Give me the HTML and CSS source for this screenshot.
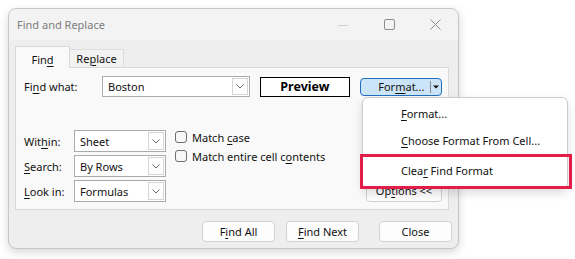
FILE: index.html
```html
<!DOCTYPE html>
<html>
<head>
<meta charset="utf-8">
<link rel="stylesheet" href="styles.css">
</head>
<body>
<div class="dialog">
  <div class="titlebar">
    <span class="title">Find and Replace</span>
    <div class="controls">
      <div class="ctl"><svg width="10" height="10" viewBox="0 0 10 10"><line x1="0" y1="5.5" x2="10" y2="5.5" stroke="#d0d0d0" stroke-width="1"/></svg></div>
      <div class="ctl"><svg width="11" height="11" viewBox="0 0 11 11"><rect x="0.5" y="0.5" width="10" height="10" rx="1.5" fill="none" stroke="#8c8c8c" stroke-width="1"/></svg></div>
      <div class="ctl"><svg width="11" height="11" viewBox="0 0 11 11"><path d="M0.5 0.5 L10.5 10.5 M10.5 0.5 L0.5 10.5" stroke="#8c8c8c" stroke-width="1"/></svg></div>
    </div>
  </div>
  <div class="tabs">
    <div class="tab active"><span>Fin<u>d</u></span></div>
    <div class="tab"><span>Re<u>p</u>lace</span></div>
  </div>
  <div class="panel">
    <div class="find-row">
      <span class="label wide">Fi<u>n</u>d what:</span>
      <div class="combo combo-find">
        <span class="combo-text">Boston</span>
        <span class="drop"><svg width="8" height="5" viewBox="0 0 8 5"><path d="M0.5 0.5 L4 4 L7.5 0.5" fill="none" stroke="#666" stroke-width="1"/></svg></span>
      </div>
      <div class="preview">Preview</div>
      <div class="format">
        <span class="format-main">For<u>m</u>at...</span>
        <span class="divider"></span>
        <span class="arrow"><svg width="6" height="4" viewBox="0 0 6 4"><polygon points="0,0.5 6,0.5 3,3.5" fill="#111"/></svg></span>
      </div>
    </div>
    <div class="opts-row">
      <div class="opts-grid">
        <span class="label">Wit<u>h</u>in:</span>
        <div class="combo"><span class="combo-text">Sheet</span><span class="drop"><svg width="8" height="5" viewBox="0 0 8 5"><path d="M0.5 0.5 L4 4 L7.5 0.5" fill="none" stroke="#666" stroke-width="1"/></svg></span></div>
        <span class="label"><u>S</u>earch:</span>
        <div class="combo"><span class="combo-text">By Rows</span><span class="drop"><svg width="8" height="5" viewBox="0 0 8 5"><path d="M0.5 0.5 L4 4 L7.5 0.5" fill="none" stroke="#666" stroke-width="1"/></svg></span></div>
        <span class="label"><u>L</u>ook in:</span>
        <div class="combo"><span class="combo-text">Formulas</span><span class="drop"><svg width="8" height="5" viewBox="0 0 8 5"><path d="M0.5 0.5 L4 4 L7.5 0.5" fill="none" stroke="#666" stroke-width="1"/></svg></span></div>
      </div>
      <div class="checks">
        <label class="check"><span class="box"></span><span>Match <u>c</u>ase</span></label>
        <label class="check"><span class="box"></span><span>Match entire cell c<u>o</u>ntents</span></label>
      </div>
      <div class="btn options"><span>Op<u>t</u>ions &lt;&lt;</span></div>
    </div>
  </div>
  <div class="buttons">
    <div class="btn"><span>F<u>i</u>nd All</span></div>
    <div class="btn"><span><u>F</u>ind Next</span></div>
    <div class="btn close"><span>Close</span></div>
  </div>
</div>

<div class="menu">
  <div class="item"><span><u>F</u>ormat...</span></div>
  <div class="item"><span><u>C</u>hoose Format From Cell...</span></div>
  <div class="item third"><span>Clea<u>r</u> Find Format</span></div>
</div>
<div class="highlight"></div>
</body>
</html>
```

FILE: styles.css
```css
html, body {
  margin: 0;
  padding: 0;
  background: #ffffff;
}

body {
  width: 575px;
  height: 259px;
  position: relative;
  overflow: hidden;
  font-family: "Noto Sans", "DejaVu Sans", sans-serif;
  font-size: 11px;
  color: #111;
}

u {
  text-decoration-thickness: 1px;
  text-underline-offset: 2px;
}

.dialog {
  margin: 8px 0 0 8px;
  width: 451px;
  height: 241px;
  box-sizing: border-box;
  border: 1px solid #c6c6c6;
  border-radius: 8px;
  background: #eeeeee;
  box-shadow: 0 3px 10px rgba(0, 0, 0, 0.16);
  display: flex;
  flex-direction: column;
  overflow: hidden;
}

.titlebar {
  height: 31px;
  flex: none;
  background: #f3f3f3;
  display: flex;
  align-items: center;
  padding-left: 8px;
}

.title {
  color: #7d7d7d;
  line-height: 15px;
}

.controls {
  margin-left: auto;
  display: flex;
  height: 100%;
}

.ctl {
  width: 46px;
  height: 100%;
  display: flex;
  align-items: center;
  justify-content: center;
}

.tabs {
  height: 27px;
  flex: none;
  display: flex;
  align-items: flex-end;
  padding-left: 6px;
}

.tab {
  box-sizing: border-box;
  line-height: 15px;
  text-align: center;
}

.tab.active {
  width: 55px;
  height: 22px;
  padding-top: 5px;
  margin-bottom: -1px;
  background: #f9f9f9;
  border: 1px solid #d9d9d9;
  border-bottom: none;
  position: relative;
  z-index: 1;
}

.tab:not(.active) {
  width: 54px;
  height: 18px;
  padding-top: 1px;
  background: #f2f2f2;
  border: 1px solid #dcdcdc;
  border-left: none;
  border-bottom: none;
}

.panel {
  flex: none;
  margin-left: 6px;
  width: 434px;
  height: 143px;
  box-sizing: border-box;
  border: 1px solid #d9d9d9;
  background: #f9f9f9;
  padding: 8px 6px 7px 8px;
  display: flex;
  flex-direction: column;
}

.find-row {
  display: flex;
  align-items: center;
  height: 21px;
}

.label {
  line-height: 15px;
}

.label.wide {
  width: 78px;
  flex: none;
}

.combo {
  box-sizing: border-box;
  height: 22px;
  border: 1px solid #ababab;
  background: #ffffff;
  display: flex;
  align-items: stretch;
}

.combo-find {
  width: 148px;
  height: 21px;
}

.combo-text {
  flex: 1;
  padding-left: 5px;
  display: flex;
  align-items: center;
  line-height: 15px;
}

.drop {
  width: 16px;
  flex: none;
  margin: 1px;
  border: 1px solid #d6d6d6;
  box-sizing: border-box;
  display: flex;
  align-items: center;
  justify-content: center;
  background: #fdfdfd;
}

.preview {
  margin-left: 10px;
  width: 91px;
  height: 20px;
  box-sizing: border-box;
  border: 1px solid #000;
  background: #fff;
  font-weight: 700;
  font-size: 12.5px;
  display: flex;
  align-items: center;
  justify-content: center;
  color: #000;
}

.format {
  margin-left: 10px;
  width: 82px;
  height: 18px;
  box-sizing: border-box;
  border: 1px solid #1f6fc0;
  border-radius: 4px;
  background: #cce4f7;
  display: flex;
  align-items: center;
}

.format-main {
  flex: 1;
  padding-left: 17px;
  line-height: 15px;
}

.divider {
  width: 1px;
  height: 12px;
  background: #8a8a8a;
}

.arrow {
  width: 10px;
  display: flex;
  justify-content: center;
  align-items: center;
}

.opts-row {
  margin-top: 33px;
  display: flex;
  align-items: flex-start;
  flex: 1;
}

.opts-grid {
  display: grid;
  grid-template-columns: 50px 92px;
  grid-auto-rows: 22px;
  row-gap: 3px;
  align-items: center;
}

.checks {
  margin-left: 9px;
  padding-top: 1px;
  display: flex;
  flex-direction: column;
}

.check {
  height: 19px;
  display: flex;
  align-items: flex-start;
  line-height: 13px;
}

.box {
  width: 12px;
  height: 12px;
  box-sizing: border-box;
  border: 1px solid #6f6f6f;
  border-radius: 3px;
  background: #f7f7f7;
  margin-right: 5px;
}

.btn {
  box-sizing: border-box;
  width: 73px;
  height: 21px;
  border: 1px solid #d2d2d2;
  border-radius: 4px;
  background: #fdfdfd;
  display: flex;
  align-items: center;
  justify-content: center;
  line-height: 15px;
}

.options {
  margin-left: auto;
  align-self: flex-end;
  width: 76px;
  height: 24px;
}

.buttons {
  margin-top: 11px;
  display: flex;
  justify-content: flex-end;
  padding-right: 6px;
  gap: 11px;
}

.buttons .close {
  margin-left: 9px;
}

.menu {
  position: absolute;
  left: 362px;
  top: 97px;
  width: 206px;
  height: 92px;
  box-sizing: border-box;
  border: 1px solid #cdcdcd;
  border-radius: 6px;
  background: #ffffff;
  box-shadow: 0 4px 10px rgba(0, 0, 0, 0.14);
  padding-top: 2px;
}

.item {
  height: 27px;
  padding-left: 38px;
  display: flex;
  align-items: center;
  line-height: 15px;
}

.item.third {
  margin-top: 3px;
}

.highlight {
  position: absolute;
  left: 360px;
  top: 154px;
  width: 212px;
  height: 35px;
  box-sizing: border-box;
  border: 3px solid #e31c4a;
}
```
